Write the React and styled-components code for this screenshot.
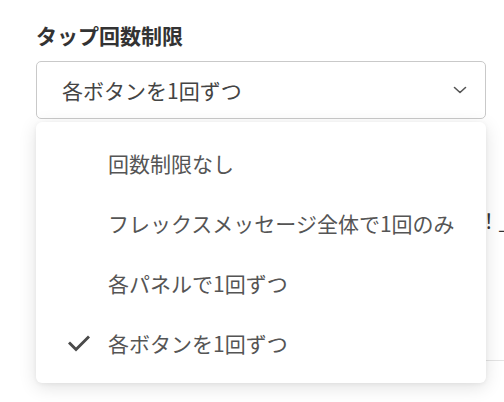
import styled, { createGlobalStyle } from "styled-components";

const GlobalStyle = createGlobalStyle`
  html, body {
    margin: 0;
    padding: 0;
    background: #ffffff;
    overflow: hidden;
  }
  body {
    font-family: "Noto Sans CJK JP", "Noto Sans", sans-serif;
    color: #444;
  }
`;

const OPTIONS = [
  "回数制限なし",
  "フレックスメッセージ全体で1回のみ",
  "各パネルで1回ずつ",
  "各ボタンを1回ずつ",
];

function App() {
  const selected = OPTIONS[3];

  return (
    <>
      <GlobalStyle />
      <Page>
        <Field>
          <Label>タップ回数制限</Label>
          <SelectBox>
            <span>{selected}</span>
            <svg width="14" height="8" viewBox="0 0 14 8" fill="none">
              <path
                d="M1.5 1.5 L7 6.5 L12.5 1.5"
                stroke="#555"
                strokeWidth="1.6"
                strokeLinecap="round"
                strokeLinejoin="round"
              />
            </svg>
          </SelectBox>

          <Menu>
            {OPTIONS.map((value) => (
              <Item key={value}>
                <CheckSlot>
                  {value === selected && (
                    <svg width="22" height="17" viewBox="0 0 22 17" fill="none">
                      <path
                        d="M2 8.5 L8 14.5 L20 2.5"
                        stroke="#4a4a4a"
                        strokeWidth="3"
                        strokeLinecap="square"
                      />
                    </svg>
                  )}
                </CheckSlot>
                {value}
              </Item>
            ))}
          </Menu>
        </Field>

        <Behind>
          <span>！_</span>
        </Behind>
        <Divider />
      </Page>
    </>
  );
}

export default App;

const Page = styled.div`
  width: 504px;
  height: 402px;
  padding-top: 23px;
  box-sizing: border-box;
  position: relative;
`;

const Field = styled.div`
  position: relative;
  margin: 0 18px 0 36px;
`;

const Label = styled.div`
  font-size: 21px;
  line-height: 24px;
  font-weight: 700;
  color: #333;
  margin-bottom: 14px;
`;

const SelectBox = styled.div`
  height: 58px;
  box-sizing: border-box;
  border: 1.5px solid #c9c9c9;
  border-radius: 5px;
  display: flex;
  align-items: center;
  justify-content: space-between;
  padding: 0 18px 0 25px;
  font-size: 21px;
  color: #444;
`;

const Menu = styled.div`
  position: absolute;
  top: 99px;
  left: 0;
  width: 450px;
  background: #fff;
  border-radius: 6px;
  box-shadow: 0 4px 18px rgba(0, 0, 0, 0.12), 0 1px 4px rgba(0, 0, 0, 0.05);
  padding: 11px 0 10px;
  z-index: 5;
`;

const Item = styled.div`
  height: 60px;
  display: flex;
  align-items: center;
  font-size: 21px;
  color: #555;
`;

const CheckSlot = styled.div`
  width: 72px;
  display: flex;
  justify-content: flex-end;
  padding-right: 18px;
  box-sizing: border-box;
`;

const Behind = styled.div`
  margin-top: 90px;
  display: flex;
  justify-content: flex-end;
  font-size: 20px;
  line-height: 24px;
  color: #333;
  margin-right: -6px;
`;

const Divider = styled.div`
  margin: 127px 0 0 36px;
  height: 1px;
  background: #e4e4e4;
`;
